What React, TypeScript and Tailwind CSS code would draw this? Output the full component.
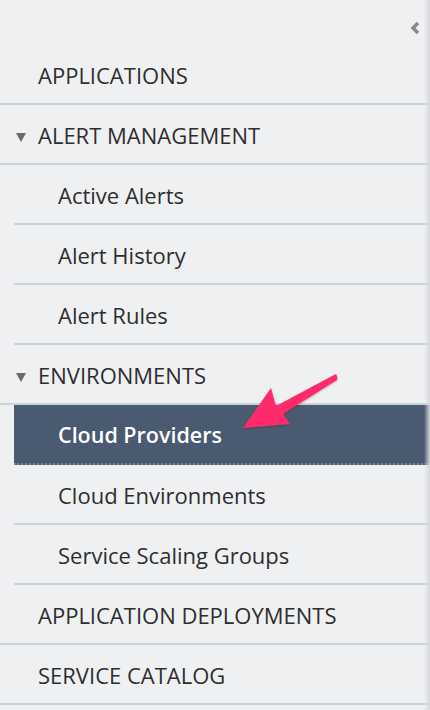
import React from 'react';

type Item = { label: string; level: 0 | 1; group?: boolean; active?: boolean };

const items: Item[] = [
  { label: 'APPLICATIONS', level: 0 },
  { label: 'ALERT MANAGEMENT', level: 0, group: true },
  { label: 'Active Alerts', level: 1 },
  { label: 'Alert History', level: 1 },
  { label: 'Alert Rules', level: 1 },
  { label: 'ENVIRONMENTS', level: 0, group: true },
  { label: 'Cloud Providers', level: 1, active: true },
  { label: 'Cloud Environments', level: 1 },
  { label: 'Service Scaling Groups', level: 1 },
  { label: 'APPLICATION DEPLOYMENTS', level: 0 },
  { label: 'SERVICE CATALOG', level: 0 },
];

function NavRow({ item }: { item: Item }) {
  if (item.level === 0) {
    return (
      <div className="relative flex h-[60px] items-center border-b-2 border-[#cdd2d8] pl-[38px] pt-[3px] text-[22px] text-[#2e2e2e]">
        {item.group && (
          <span className="absolute left-[16px] top-[28px] h-0 w-0 border-x-[5.5px] border-t-[9px] border-x-transparent border-t-[#6b6b6b]" />
        )}
        {item.label}
      </div>
    );
  }
  if (item.active) {
    return (
      <div className="ml-[14px] flex h-[60px] items-center border-b-2 border-dotted border-[#7d838c] bg-[#4a5a70] pl-[44px] pt-[3px] text-[21.5px] font-semibold text-white">
        {item.label}
      </div>
    );
  }
  return (
    <div className="ml-[14px] flex h-[60px] items-center border-b-2 border-[#cdd2d8] pl-[44px] pt-[3px] text-[22px] text-[#2e2e2e]">
      {item.label}
    </div>
  );
}

export default function App() {
  return (
    <div
      className="relative h-[710px] w-[430px] overflow-hidden bg-[#eff0f2]"
      style={{ fontFamily: '"Open Sans", "Liberation Sans", sans-serif' }}
    >
      <div className="flex h-[45px] justify-end pr-[10px] pt-[21px]">
        <svg width="10" height="14" viewBox="0 0 10 14">
          <path d="M8 2 L3 7 L8 12" fill="none" stroke="#8a8a8a" strokeWidth="3.4" />
        </svg>
      </div>
      <nav>
        {items.map((it) => (
          <NavRow key={it.label} item={it} />
        ))}
      </nav>

      {/* annotation arrow */}
      <svg className="pointer-events-none absolute left-0 top-0" width="430" height="710">
        <defs>
          <filter id="sh" x="-20%" y="-20%" width="140%" height="140%">
            <feDropShadow dx="0" dy="1" stdDeviation="1.2" floodColor="#000" floodOpacity="0.25" />
          </filter>
        </defs>
        <path
          d="M336 374 Q338 377 337 380 L283 414 L290 424 L243 428 L271 388 L276 406 L334 375 Z"
          fill="#fd2b6c"
          filter="url(#sh)"
        />
      </svg>

      {/* right edge shadow */}
      <div className="pointer-events-none absolute right-0 top-0 h-full w-[6px] bg-gradient-to-r from-transparent to-[#d6d7da]" />
    </div>
  );
}
